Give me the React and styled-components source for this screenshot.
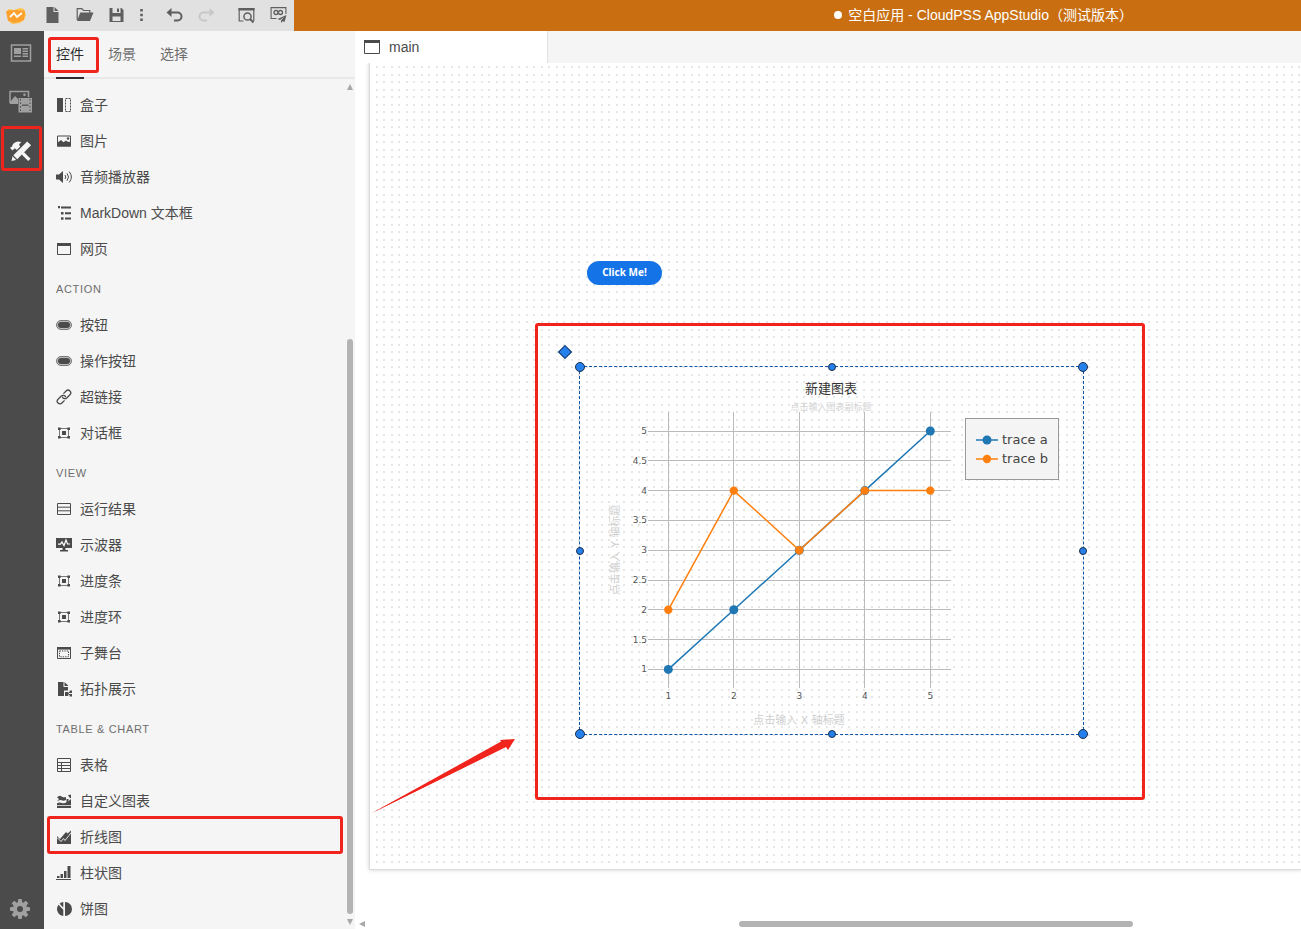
import React, { useState } from 'react';
import styled, { createGlobalStyle, css } from 'styled-components';

const widgetGroups = [
  {
    title: null,
    items: [
      { icon: 'box', label: '盒子' },
      { icon: 'image', label: '图片' },
      { icon: 'audio', label: '音频播放器' },
      { icon: 'outline', label: 'MarkDown 文本框' },
      { icon: 'window', label: '网页' },
    ],
  },
  {
    title: 'ACTION',
    items: [
      { icon: 'pill', label: '按钮' },
      { icon: 'pill', label: '操作按钮' },
      { icon: 'link', label: '超链接' },
      { icon: 'frame', label: '对话框' },
    ],
  },
  {
    title: 'VIEW',
    items: [
      { icon: 'rows', label: '运行结果' },
      { icon: 'scope', label: '示波器' },
      { icon: 'frame', label: '进度条' },
      { icon: 'frame', label: '进度环' },
      { icon: 'stage', label: '子舞台' },
      { icon: 'topology', label: '拓扑展示' },
    ],
  },
  {
    title: 'TABLE & CHART',
    items: [
      { icon: 'table', label: '表格' },
      { icon: 'customChart', label: '自定义图表' },
      { icon: 'lineChart', label: '折线图', marked: true },
      { icon: 'barChart', label: '柱状图' },
      { icon: 'pieChart', label: '饼图' },
    ],
  },
];

const icons = {
  box: (
    <>
      <path d='M1 1h6v14H1z' fill='currentColor' />
      <path d='M9.5 1.5h5v13h-5z' fill='none' stroke='currentColor' strokeDasharray='2 1' />
    </>
  ),
  image: (
    <>
      <path d='M1.5 3h13v10h-13z' fill='none' stroke='currentColor' />
      <path d='M1 10l4-3 2.500 2.300L10 7.500l2 1.500 1-.5 2 1.500v3.500H1z' fill='currentColor' />
      <circle cx='12' cy='5.5' r='1.2' fill='currentColor' />
    </>
  ),
  audio: (
    <>
      <path d='M0 5.500h3L7 2v12l-4-3.500H0z' fill='currentColor' />
      <path
        d='M9 6q1.6 2 0 4M11 4.3q3 3.7 0 7.4M13.2 2.6q4.4 5.4 0 10.8'
        fill='none'
        stroke='currentColor'
      />
    </>
  ),
  outline: (
    <path
      d='M2 1h2v2.200H2zM5 1.500h10v2H5zM5 7h2.500v2.500H5zM9 7.200h6v2H9zM5 12.200h2.500v2.500H5zM9 12.500h6v2H9z'
      fill='currentColor'
    />
  ),
  window: (
    <>
      <path d='M1.5 2.5h13v11h-13z' fill='none' stroke='currentColor' />
      <path d='M1 2h14v3H1z' fill='currentColor' />
    </>
  ),
  pill: (
    <>
      <rect x='0.5' y='3.5' width='15' height='9' rx='4.5' fill='#bdbdbd' stroke='#777' />
      <rect x='2' y='5' width='12' height='6' rx='3' fill='currentColor' />
    </>
  ),
  link: (
    <g transform='rotate(-45 8 8)' fill='none' stroke='currentColor' strokeWidth='1.3'>
      <path d='M6 10.8H2.200a2.700 2.700 0 0 1 0-5.400h4.500a2.700 2.700 0 0 1 2.300 4' />
      <path d='M10 5.200h3.800a2.700 2.700 0 0 1 0 5.400H9.300a2.700 2.700 0 0 1-2.300-4' />
    </g>
  ),
  frame: (
    <>
      <path d='M3.5 3.5h9v9h-9z' fill='none' stroke='#777' />
      <path
        d='M2 2.500h2.600v2.500H2zM11.400 2.500H14v2.500h-2.600zM2 11h2.600v2.500H2zM11.400 11H14v2.500h-2.600zM6 6h4v4H6z'
        fill='currentColor'
      />
    </>
  ),
  rows: (
    <path
      d='M1.500 2.500h13v11h-13zM1.500 6.200h13M1.500 9.800h13'
      fill='none'
      stroke='currentColor'
    />
  ),
  scope: (
    <>
      <path d='M0 1h16v10H9.5v2H12v1.5H4V13h2.5v-2H0z' fill='currentColor' />
      <path d='M2 7.2h2.5L6 5l2 3.5L10 3l1.5 4h2.5' fill='none' stroke='#fff' strokeWidth='1.2' />
    </>
  ),
  stage: (
    <>
      <path d='M1.5 2.5h13v11h-13z' fill='none' stroke='currentColor' />
      <path d='M1 2h14v2.6H1z' fill='currentColor' />
      <path d='M3.5 6h9v5.8h-9z' fill='none' stroke='currentColor' strokeDasharray='1.4 1' />
    </>
  ),
  topology: (
    <>
      <path d='M2 1h5.500v5H12v3.500H8V15H2z' fill='currentColor' />
      <path d='M8.500 1L12.500 5h-4z' fill='currentColor' />
      <path d='M9 11h3.200v4H9z' fill='currentColor' />
      <path d='M15 10.5l-3 2 3 2' fill='none' stroke='currentColor' />
      <path d='M13.600 9.500H16V12h-2.400zM13.600 13H16v2.500h-2.400z' fill='currentColor' />
    </>
  ),
  table: (
    <path
      d='M1.5 1.5h13v13h-13zM1.5 5.5h13M1.5 8.5h13M1.5 11.5h13M5.5 5.5v9'
      fill='none'
      stroke='currentColor'
    />
  ),
  customChart: (
    <>
      <path d='M1 4.500q2.500-3 5-.8 1.500 1 4 .3v3q-2.500 1.200-4.500.2T1 8.500l2-2.500z' fill='currentColor' />
      <path d='M1 12.200v-2q2.500-1.500 5-.2 3 .8 4.500-1V6h2v2.500l1.500-2h1v5.700z' fill='currentColor' />
      <path d='M1 13h14v2H1zM12 2.200l3-.7v4l-1.500-1z' fill='currentColor' />
    </>
  ),
  lineChart: (
    <>
      <path d='M1 7l3 3 6-7 1.500 1.500L15 1.500V15H1z' fill='currentColor' />
      <path d='M1 8.500l4 4 2.500-3 1.500 2 4-5 2-3' fill='none' stroke='#f5f5f5' strokeWidth='0.9' />
    </>
  ),
  barChart: (
    <path
      d='M0 14h15v1H0zM1 11h2.500v2H1zM4.500 9H7v4H4.500zM8 6h2.500v7H8zM11.500 1h3v12h-3z'
      fill='currentColor'
    />
  ),
  pieChart: (
    <>
      <path d='M9 1a7 7 0 0 1 0 14z' fill='currentColor' />
      <path d='M7.300 1v5.400L3.600 2.700A7 7 0 0 1 7.300 1zM2.500 3.800l4.800 4.900V15A7 7 0 0 1 2.500 3.800z' fill='currentColor' />
    </>
  ),
};

const toolIcons = {
  file: (
    <>
      <path d='M2 0h7v5h5v11H2z' fill='currentColor' />
      <path d='M10 0l4 4h-4z' fill='currentColor' />
    </>
  ),
  folder: (
    <>
      <path d='M.7 13V1.700h4.600L7 3.500h6.300V6' fill='none' stroke='currentColor' strokeWidth='1.200' />
      <path d='M3.800 5.500H17L13.500 14H.5z' fill='currentColor' />
    </>
  ),
  save: (
    <path
      fillRule='evenodd'
      d='M1 1h12l2 2v12H1zM4 1v5h8V1zM4 9.500V14h8V9.500zM8.500 1.500h2V5h-2z'
      fill='currentColor'
    />
  ),
  more: (
    <path d='M6.700 2h2.600v2.600H6.700zM6.700 6.700h2.600v2.600H6.700zM6.700 11.500h2.600v2.600H6.700z' fill='currentColor' />
  ),
  undo: (
    <>
      <path d='M3 5.500h8a4 4 0 0 1 0 8H7.500' fill='none' stroke='currentColor' strokeWidth='2' />
      <path d='M0 5.500L5 1v9z' fill='currentColor' />
    </>
  ),
  redo: (
    <>
      <path d='M13 5.500H5a4 4 0 0 0 0 8h3.500' fill='none' stroke='currentColor' strokeWidth='2' />
      <path d='M16 5.500L11 1v9z' fill='currentColor' />
    </>
  ),
  preview: (
    <>
      <path d='M5 14H.7V1.500h14.600V14' fill='none' stroke='currentColor' strokeWidth='1.200' />
      <path d='M0 1h16v2.500H0z' fill='currentColor' />
      <circle cx='9' cy='9.500' r='3.600' fill='none' stroke='currentColor' strokeWidth='1.500' />
      <path d='M11.500 12l3.500 3.500' stroke='currentColor' strokeWidth='2' />
    </>
  ),
  publish: (
    <>
      <path d='M6 11.500H.6V.6h14.800V7' fill='none' stroke='currentColor' strokeWidth='1.100' />
      <circle cx='5.500' cy='5.500' r='2' fill='none' stroke='currentColor' strokeWidth='1.300' />
      <circle cx='10' cy='5.500' r='2' fill='none' stroke='currentColor' strokeWidth='1.300' />
      <path d='M16 8l-9 4 2.500 1 4-3-3 3.600V16l1.500-1.800 2 .8z' fill='currentColor' />
    </>
  ),
};

const railIcons = {
  page: (
    <>
      <path d='M1.500 3h19v16h-19z' fill='none' stroke='currentColor' strokeWidth='1.500' />
      <path d='M4 6h7v6H4zM12.500 6H18v1.500h-5.500zM12.500 8.500H18V10h-5.500zM12.500 11H18v1.500h-5.500zM4 13.500h7V15H4zM12.500 13.500H18V15h-5.500z' fill='currentColor' />
    </>
  ),
  media: (
    <>
      <path d='M8 12.500H1V1.500h18.500V7' fill='none' stroke='currentColor' strokeWidth='1.500' />
      <path d='M1 12l5-6 3 3v5H1z' fill='currentColor' />
      <circle cx='15.500' cy='4.800' r='1.300' fill='currentColor' />
      <path d='M9.500 8H23v14.500H9.500z' fill='currentColor' />
      <path d='M11.500 9v13M21 9v13' stroke='#4b4b4b' strokeWidth='1' strokeDasharray='1.500 2' />
      <path d='M13 15.200h6.500' stroke='#4b4b4b' strokeWidth='1.200' />
    </>
  ),
  tools: (
    <>
      <path d='M0 8l2-1q1-4.500 6-5.500l4 .5L9.500 4.500l1 2.500L7 10.500 5 8.500 2.500 11z' fill='currentColor' />
      <path d='M14.500 12.500L21.500 19.500l-2.500 2.500-7-7z' fill='currentColor' />
      <path d='M18 1.500l4 4L7.500 20l-4-4z' fill='currentColor' />
      <path d='M2.700 17l3.800 3.800L1.500 22z' fill='currentColor' />
    </>
  ),
  gear: (
    <>
      <g fill='currentColor'>
        {[0, 45, 90, 135].map((angle) => (
          <path key={angle} d='M9.300 1h3.400l.6 4v12l-.6 4H9.300l-.6-4V5z' transform={`rotate(${angle} 11 11)`} />
        ))}
        <circle cx='11' cy='11' r='7' />
      </g>
      <circle cx='11' cy='11' r='3' fill='#4b4b4b' />
    </>
  ),
};

const traces = [
  { name: 'trace a', color: '#1f77b4', radius: 4.5, values: [1, 2, 3, 4, 5] },
  { name: 'trace b', color: '#ff7f0e', radius: 4.2, values: [2, 4, 3, 4, 4] },
];
const xTicks = [1, 2, 3, 4, 5];
const yTicks = [1, 1.5, 2, 2.5, 3, 3.5, 4, 4.5, 5];
const xPos = (x) => 22.8 + x * 65.5;
const yPos = (y) => 362 - y * 59.6;

const handles = [
  { x: 0, y: 0, corner: true },
  { x: 50, y: 0 },
  { x: 100, y: 0, corner: true },
  { x: 0, y: 50 },
  { x: 100, y: 50 },
  { x: 0, y: 100, corner: true },
  { x: 50, y: 100 },
  { x: 100, y: 100, corner: true },
];

const LineChart = () => (
  <ChartSvg viewBox='0 0 503 367' role='img' aria-label='新建图表'>
    <g stroke='#bbb' strokeWidth='1' shapeRendering='crispEdges'>
      {xTicks.map((x) => (
        <line key={x} x1={xPos(x)} x2={xPos(x)} y1='45' y2='321' />
      ))}
      {yTicks.map((y) => (
        <line key={y} x1='68' x2='371' y1={yPos(y)} y2={yPos(y)} />
      ))}
    </g>
    {traces.map((trace) => (
      <g key={trace.name} fill={trace.color} stroke={trace.color}>
        <polyline
          points={trace.values.map((v, i) => `${xPos(i + 1)},${yPos(v)}`).join(' ')}
          fill='none'
          strokeWidth='1.5'
        />
        {trace.values.map((v, i) => (
          <circle key={i} cx={xPos(i + 1)} cy={yPos(v)} r={trace.radius} stroke='none' />
        ))}
      </g>
    ))}
    {xTicks.map((x) => (
      <TickText key={x} x={xPos(x)} y='332' textAnchor='middle'>
        {x}
      </TickText>
    ))}
    {yTicks.map((y) => (
      <TickText key={y} x='67' y={yPos(y) + 3} textAnchor='end'>
        {y}
      </TickText>
    ))}
    <ChartTitle x='251' y='26'>新建图表</ChartTitle>
    <ChartSubtitle x='251' y='43'>点击输入图表副标题</ChartSubtitle>
    <AxisTitle x='219' y='357'>点击输入 X 轴标题</AxisTitle>
    <AxisTitle transform='translate(39 183) rotate(-90)'>点击输入 Y 轴标题</AxisTitle>
    <rect x='385.5' y='51.5' width='93' height='61' fill='#f4f4f4' stroke='#999' />
    {traces.map((trace, i) => (
      <g key={trace.name} fill={trace.color}>
        <path d={`M396 ${73 + i * 19}h22`} stroke={trace.color} strokeWidth='1.5' />
        <circle cx='407' cy={73 + i * 19} r={trace.radius} />
        <LegendText x='422' y={77 + i * 19}>
          {trace.name}
        </LegendText>
      </g>
    ))}
  </ChartSvg>
);

const ToolButton = ({ icon, label, narrow, disabled }) => (
  <ToolbarButton aria-label={label} $narrow={narrow} disabled={disabled}>
    <svg width='17' height='16' viewBox='0 0 16 16' overflow='visible'>
      {toolIcons[icon]}
    </svg>
  </ToolbarButton>
);

const App = () => {
  const [tab, setTab] = useState('控件');

  return (
    <AppLayout>
      <GlobalStyle />
      <TitleBar>
        <Toolbar>
          <Logo width='20' height='18' viewBox='0 0 20 18'>
            <path d='M2 2l6 1 6-2 4 1 2 6-2 5-4 3-8 1-3-3-2-7z' fill='#ffc04d' />
            <path d='M0 4l10-1 9 1-1 9-9 3-7-2z' fill='#fba02c' />
            <path d='M4 10l4-4 3 4 5-4' fill='none' stroke='#fff' strokeWidth='1.8' />
          </Logo>
          <ToolButton icon='file' label='新建' />
          <ToolButton icon='folder' label='打开' />
          <ToolButton icon='save' label='保存' />
          <ToolButton icon='more' label='更多' narrow />
          <ToolGroup>
            <ToolButton icon='undo' label='撤销' />
            <ToolButton icon='redo' label='重做' disabled />
          </ToolGroup>
          <ToolGroup>
            <ToolButton icon='preview' label='预览' />
            <ToolButton icon='publish' label='发布' />
          </ToolGroup>
        </Toolbar>
        <AppTitle>
          <UnsavedDot />
          空白应用 - CloudPSS AppStudio（测试版本）
        </AppTitle>
      </TitleBar>
      <Body>
        <Rail>
          <RailButton aria-label='页面'>
            <svg width='22' height='22'>{railIcons.page}</svg>
          </RailButton>
          <RailButton aria-label='资源'>
            <svg width='24' height='24' viewBox='0 0 24 24'>{railIcons.media}</svg>
          </RailButton>
          <RailButton aria-label='工具' $active>
            <svg width='22' height='22' viewBox='0 0 23 23'>{railIcons.tools}</svg>
            <Mark $inset='-3px 0 2px 1px' />
          </RailButton>
          <RailFooter>
            <RailButton aria-label='设置'>
              <svg width='22' height='22' viewBox='0 0 22 22'>{railIcons.gear}</svg>
            </RailButton>
          </RailFooter>
        </Rail>
        <Panel>
          <PanelTabs>
            {['控件', '场景', '选择'].map((name) => (
              <PanelTab key={name} $active={tab === name} onClick={() => setTab(name)}>
                {name}
                {name === '控件' && <Mark $inset='6px -15px 4px -8px' />}
              </PanelTab>
            ))}
          </PanelTabs>
          <PanelBody>
            <WidgetScroll>
              {widgetGroups.map((group) => (
                <section key={group.title || 'basic'}>
                  {group.title && <GroupTitle>{group.title}</GroupTitle>}
                  {group.items.map((item) => (
                    <WidgetButton key={item.label}>
                      <svg width='16' height='16' viewBox='0 0 16 16'>
                        {icons[item.icon]}
                      </svg>
                      <WidgetLabel>{item.label}</WidgetLabel>
                      {item.marked && <Mark $inset='-3px 2px 1px 3px' />}
                    </WidgetButton>
                  ))}
                </section>
              ))}
            </WidgetScroll>
            <ScrollColumn>
              <ScrollArrow $direction='up' />
              <ScrollTrack>
                <ScrollThumb />
              </ScrollTrack>
              <ScrollArrow $direction='down' />
            </ScrollColumn>
          </PanelBody>
        </Panel>
        <Workspace>
          <PageTabs>
            <PageTab>
              <svg width='16' height='16' viewBox='0 0 16 16'>
                <path d='M.5 1.500h15v13H.5z' fill='none' stroke='currentColor' />
                <path d='M0 1h16v3H0z' fill='currentColor' />
              </svg>
              main
            </PageTab>
          </PageTabs>
          <Stage>
            <Sheet>
              <ClickButton>Click Me!</ClickButton>
              <Selection>
                <LineChart />
                <RotateHandle />
                {handles.map((handle) => (
                  <Handle
                    key={`${handle.x}-${handle.y}`}
                    $x={handle.x}
                    $y={handle.y}
                    $corner={handle.corner}
                  />
                ))}
              </Selection>
              <ChartMark />
              <Arrow viewBox='0 0 146 78'>
                <path d='M2 77L132 7l-2-3 15-1-7 11-2-3z' fill='#f0241c' />
                <path d='M2 77L132 5l3 6z' fill='#f0241c' />
              </Arrow>
            </Sheet>
          </Stage>
          <BottomScroll>
            <ScrollArrow $direction='left' />
            <BottomTrack>
              <BottomThumb />
            </BottomTrack>
          </BottomScroll>
        </Workspace>
      </Body>
    </AppLayout>
  );
};

const GlobalStyle = createGlobalStyle`
  body {
    margin: 0;
    overflow: hidden;
    color: #4b4b4b;
    font-family: 'Liberation Sans', 'Noto Sans CJK SC', sans-serif;
    font-size: 14px;
  }
  button {
    margin: 0;
    padding: 0;
    border: none;
    background: none;
    color: inherit;
    font: inherit;
  }
  svg {
    display: block;
    flex-shrink: 0;
  }
`;

const AppLayout = styled.div`
  display: flex;
  flex-direction: column;
  height: 100vh;
`;

const TitleBar = styled.header`
  display: flex;
  justify-content: space-between;
  height: 31px;
  flex-shrink: 0;
  background-color: #c96f12;
`;

const Toolbar = styled.div`
  display: flex;
  align-items: center;
  background-color: #e1e1e1;
`;

const Logo = styled.svg`
  margin: 0 10px 0 6px;
`;

const ToolGroup = styled.div`
  display: flex;
  margin-left: 8px;
`;

const ToolbarButton = styled.button`
  display: flex;
  justify-content: center;
  align-items: center;
  width: ${({ $narrow }) => ($narrow ? '18px' : '32px')};
  height: 31px;
  padding-bottom: 2px;
  color: #5f5f5f;
  &:disabled {
    color: #c8c8c8;
  }
`;

const AppTitle = styled.div`
  display: flex;
  align-items: center;
  padding: 0 168px 4px 0;
  color: white;
  white-space: nowrap;
`;

const UnsavedDot = styled.span`
  width: 8px;
  height: 8px;
  margin: 2px 6px 0 0;
  border-radius: 50%;
  background-color: white;
`;

const Body = styled.div`
  display: flex;
  flex: 1;
  min-height: 0;
`;

const Rail = styled.nav`
  display: flex;
  flex-direction: column;
  gap: 5px;
  width: 44px;
  flex-shrink: 0;
  background-color: #4b4b4b;
`;

const RailButton = styled.button`
  position: relative;
  display: flex;
  justify-content: center;
  align-items: center;
  width: 42px;
  height: 44px;
  color: ${({ $active }) => ($active ? '#f5f5f5' : '#a0a0a0')};
`;

const RailFooter = styled.div`
  display: flex;
  align-items: center;
  height: 40px;
  width: 40px;
  margin-top: auto;
`;

const Mark = styled.span`
  position: absolute;
  inset: ${({ $inset }) => $inset};
  border: 3px solid #f0241c;
  border-radius: 3px;
  pointer-events: none;
  z-index: 1;
`;

const Panel = styled.aside`
  display: flex;
  flex-direction: column;
  width: 311px;
  flex-shrink: 0;
  background-color: #f5f5f5;
`;

const PanelTabs = styled.div`
  display: flex;
  gap: 24px;
  height: 46px;
  flex-shrink: 0;
  padding-left: 12px;
  border-bottom: 2px solid #e8e8e8;
`;

const PanelTab = styled.button`
  position: relative;
  height: 48px;
  box-sizing: border-box;
  padding-bottom: 2px;
  border-bottom: 2px solid transparent;
  color: #6e6e6e;
  ${({ $active }) =>
    $active &&
    css`
      color: #2c2c2c;
      border-bottom-color: #2c2c2c;
    `}
`;

const PanelBody = styled.div`
  display: flex;
  flex: 1;
  min-height: 0;
`;

const WidgetScroll = styled.div`
  flex: 1;
  overflow: hidden;
  padding-top: 8px;
`;

const GroupTitle = styled.h2`
  height: 36px;
  margin: 0;
  padding: 4px 0 0 12px;
  color: #6e6e6e;
  font-size: 11px;
  font-weight: 400;
  letter-spacing: 0.06em;
  line-height: 36px;
`;

const WidgetButton = styled.button`
  position: relative;
  display: flex;
  align-items: center;
  gap: 8px;
  width: 100%;
  height: 36px;
  padding-left: 12px;
`;

const WidgetLabel = styled.span`
  padding-bottom: 2px;
`;

const ScrollColumn = styled.div`
  display: flex;
  flex-direction: column;
  align-items: center;
  gap: 2px;
  width: 10px;
  padding: 5px 0 4px;
`;

const ScrollTrack = styled.div`
  display: flex;
  flex: 1;
  align-items: flex-end;
  padding-bottom: 3px;
`;

const ScrollThumb = styled.div`
  width: 6px;
  height: 70%;
  border-radius: 3px;
  background-color: #b3b3b3;
`;

const arrowShapes = {
  up: 'polygon(50% 0, 100% 100%, 0 100%)',
  down: 'polygon(0 0, 100% 0, 50% 100%)',
  left: 'polygon(0 50%, 100% 0, 100% 100%)',
};

const ScrollArrow = styled.div`
  width: 6px;
  height: 6px;
  flex-shrink: 0;
  background-color: #a8a8a8;
  clip-path: ${({ $direction }) => arrowShapes[$direction]};
`;

const Workspace = styled.main`
  display: flex;
  flex-direction: column;
  flex: 1;
  min-width: 0;
`;

const PageTabs = styled.div`
  display: flex;
  height: 32px;
  flex-shrink: 0;
  background-color: #f5f5f5;
`;

const PageTab = styled.button`
  display: flex;
  align-items: center;
  gap: 9px;
  width: 193px;
  box-sizing: border-box;
  padding-left: 9px;
  border-right: 1px solid #e1e1e1;
  background-color: white;
`;

const Stage = styled.div`
  display: flex;
  flex: 1;
  min-height: 0;
  padding: 0 0 49px 14px;
  overflow: hidden;
`;

/* the grid step is 7.5px, so one 15px tile carries four dots */
const dot = (x, y) => `radial-gradient(circle at ${x}px ${y}px, #e6e6e6 1px, transparent 1px)`;

const Sheet = styled.div`
  position: relative;
  flex: 1;
  border-left: 1px solid #dcdcdc;
  border-bottom: 1px solid #dcdcdc;
  box-shadow: 0 0 4px rgba(0, 0, 0, 0.2);
  clip-path: inset(0 0 -6px -6px);
  background-color: white;
  background-image: ${[dot(7, 4), dot(14, 4), dot(7, 12), dot(14, 12)].join(', ')};
  background-size: 15px 15px;
`;

const ClickButton = styled.button`
  position: absolute;
  left: 217px;
  top: 198px;
  width: 75px;
  height: 24px;
  padding-bottom: 2px;
  border-radius: 12px;
  background-color: #1473e6;
  color: white;
  font-family: 'Noto Sans', sans-serif;
  font-size: 10px;
  font-weight: 700;
`;

const Selection = styled.div`
  position: absolute;
  left: 209px;
  top: 303px;
  width: 503px;
  height: 367px;
  border: 1px dashed #0d54a8;
`;

const RotateHandle = styled.div`
  position: absolute;
  left: -20px;
  top: -20px;
  width: 8px;
  height: 8px;
  border: 1px solid #1b3a63;
  background-color: #2680eb;
  transform: rotate(45deg);
`;

const Handle = styled.div`
  position: absolute;
  left: ${({ $x }) => $x}%;
  top: ${({ $y }) => $y}%;
  width: ${({ $corner }) => ($corner ? '8px' : '6px')};
  height: ${({ $corner }) => ($corner ? '8px' : '6px')};
  border: 1px solid #1b2f4b;
  border-radius: 50%;
  background-color: #2680eb;
  transform: translate(-50%, -50%);
`;

const ChartMark = styled.div`
  position: absolute;
  left: 165px;
  top: 260px;
  width: 604px;
  height: 471px;
  border: 3px solid #f0241c;
  border-radius: 3px;
  pointer-events: none;
`;

const Arrow = styled.svg`
  position: absolute;
  left: 0;
  top: 673px;
  width: 146px;
  height: 78px;
`;

const ChartSvg = styled.svg`
  width: 503px;
  height: 367px;
  font-family: 'DejaVu Sans', 'Noto Sans CJK SC', sans-serif;
`;

const TickText = styled.text`
  fill: #555;
  font-size: 9px;
`;

const ChartTitle = styled.text`
  fill: #333;
  font-size: 13px;
  text-anchor: middle;
`;

const ChartSubtitle = styled.text`
  fill: #d3d3d3;
  font-size: 9px;
  text-anchor: middle;
`;

const AxisTitle = styled.text`
  fill: #cfcfcf;
  font-size: 11px;
  text-anchor: middle;
`;

const LegendText = styled.text`
  fill: #444;
  font-size: 13px;
`;

const BottomScroll = styled.div`
  display: flex;
  align-items: center;
  height: 10px;
  flex-shrink: 0;
  padding-left: 4px;
`;

const BottomTrack = styled.div`
  flex: 1;
`;

const BottomThumb = styled.div`
  width: 42%;
  height: 6px;
  margin-left: 40%;
  border-radius: 3px;
  background-color: #b3b3b3;
`;

export default App;
